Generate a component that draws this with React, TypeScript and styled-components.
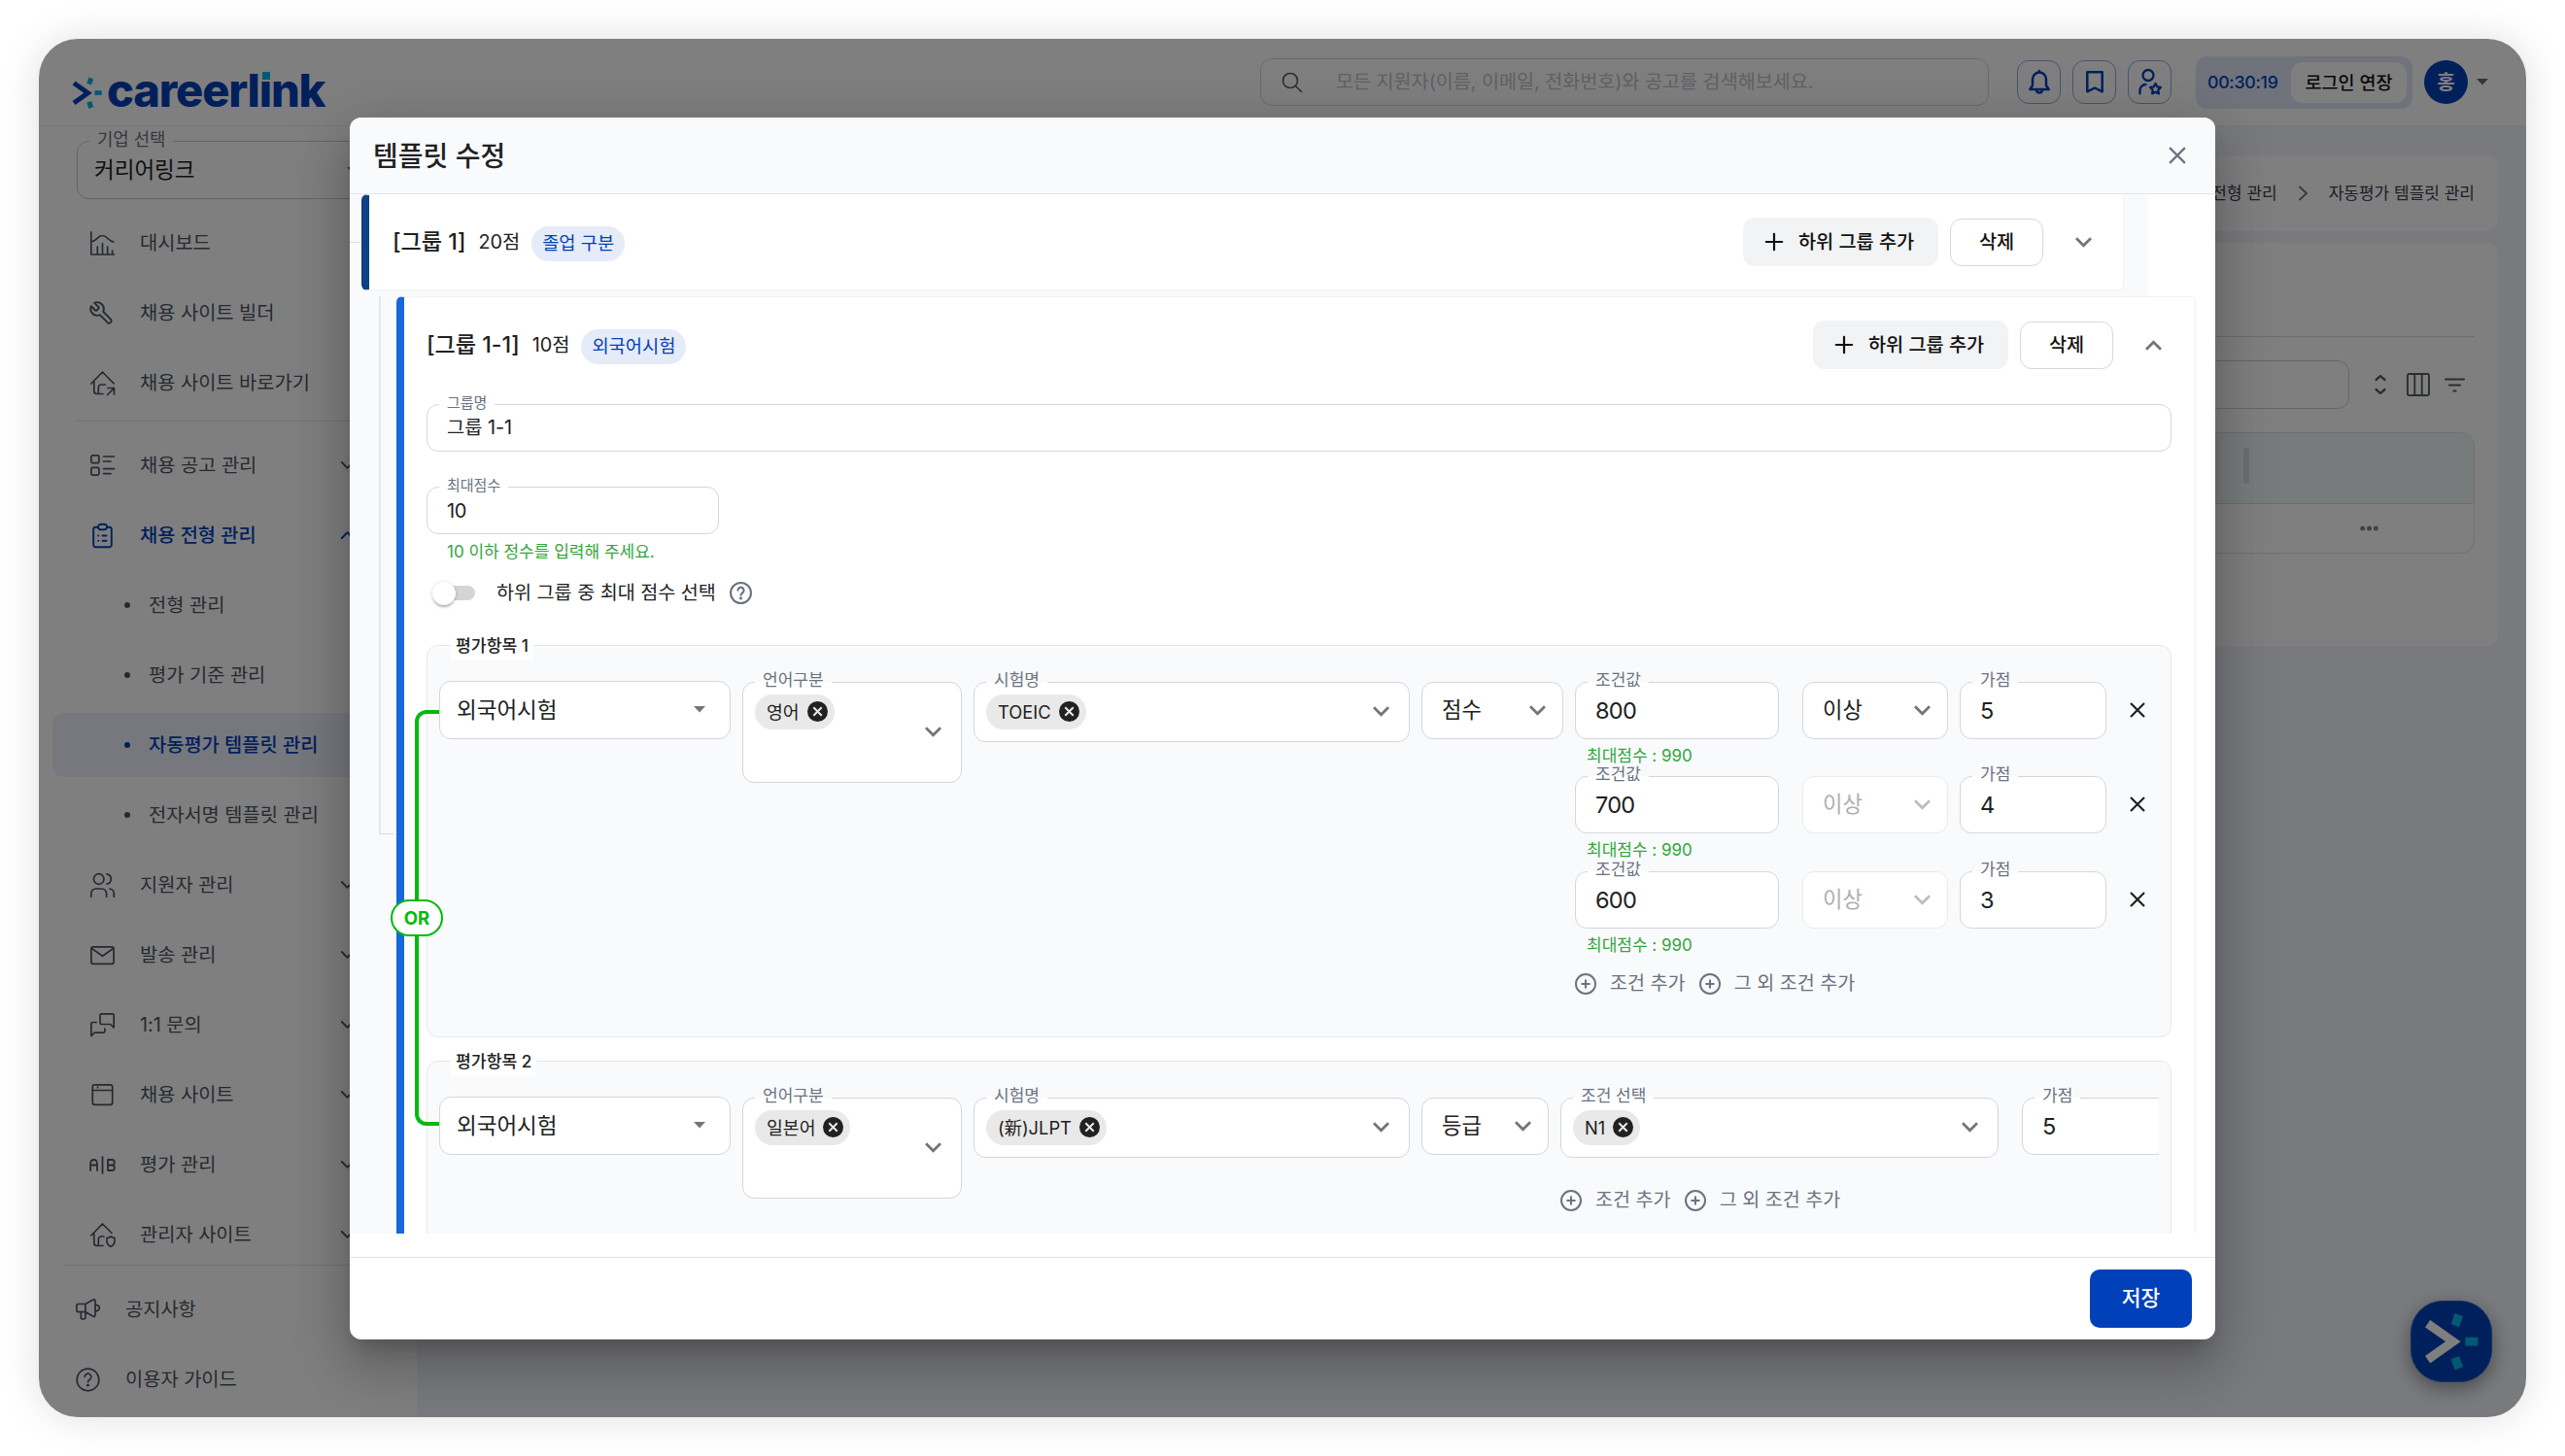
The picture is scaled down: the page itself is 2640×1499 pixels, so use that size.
import React from 'react';
import styled, { createGlobalStyle, css } from 'styled-components';
import { TbAB } from 'react-icons/tb';

const BRAND = '#0041b9';
const CYAN = '#00b4e6';
const TINT = '#f9fafc';
const GREEN = '#00bb0e';
const HELPER = '#33a63c';
const GRAY = '#6b7280';
const INK = '#212121';

const Global = createGlobalStyle`
  * { box-sizing: border-box; }
  body {
    margin: 0;
    background: #fff;
    font-family: Inter, 'Noto Sans CJK KR', sans-serif;
    color: ${INK};
  }
  svg { display: block; flex: none; }
`;

const Text = styled.span<{ $size: number; $weight?: number; $color?: string; $ls?: number; $pt?: number }>`
  padding-top: ${p => p.$pt ?? 1}px;
  font-size: ${p => p.$size}px;
  font-weight: ${p => p.$weight ?? 400};
  color: ${p => p.$color ?? 'inherit'};
  letter-spacing: ${p => p.$ls ?? 0}px;
  line-height: 1;
  white-space: nowrap;
`;

/* ---------- shell ---------- */

const Canvas = styled.div`
  width: 2640px;
  height: 1499px;
  padding: 40px;
  overflow: hidden;
`;

const Frame = styled.div`
  position: relative;
  width: 2560px;
  height: 1419px;
  border-radius: 40px;
  overflow: hidden;
  background: #fff;
  box-shadow: 0 0 40px rgba(0, 0, 0, 0.13);
`;

const Header = styled.header`
  display: flex;
  align-items: center;
  height: 90px;
  padding: 0 39px 0 34px;
  border-bottom: 1px solid #f0f1f5;
`;

const Logo = styled.div`
  display: flex;
  align-items: center;
  gap: 5px;
  padding-top: 16px;
  margin-right: auto;
`;

const Wordmark = styled.span`
  font-family: Inter, sans-serif;
  font-size: 47px;
  font-weight: 800;
  line-height: 1;
  letter-spacing: -1.15px;
  color: ${BRAND};
  white-space: nowrap;
`;

const DottedI = styled.span`
  position: relative;
  &::before {
    content: '';
    position: absolute;
    left: 1px;
    top: 7px;
    width: 11px;
    height: 12px;
    background: #fff;
  }
  &::after {
    content: '';
    position: absolute;
    left: 3px;
    top: 10px;
    width: 8px;
    height: 8px;
    background: ${CYAN};
  }
`;

const Search = styled.div`
  display: flex;
  align-items: center;
  gap: 35px;
  width: 750px;
  height: 49px;
  padding-left: 22px;
  margin-right: 29px;
  border: 1px solid #d3d6dc;
  border-radius: 12px;
`;

const IconButtons = styled.div`
  display: flex;
  gap: 12px;
  margin-right: 25px;
`;

const IconButton = styled.div`
  display: grid;
  place-items: center;
  width: 45px;
  height: 45px;
  border: 1px solid #8ea6de;
  border-radius: 12px;
`;

const Session = styled.div`
  display: flex;
  align-items: center;
  justify-content: space-between;
  width: 223px;
  height: 54px;
  padding: 0 6px 0 12px;
  margin-right: 12px;
  border-radius: 12px;
  background: #e0e7f9;
`;

const Extend = styled.div`
  display: grid;
  place-items: center;
  width: 119px;
  height: 42px;
  border-radius: 12px;
  background: #fff;
`;

const Avatar = styled.div`
  display: grid;
  place-items: center;
  width: 45px;
  height: 45px;
  margin-right: 9px;
  border-radius: 50%;
  background: ${BRAND};
`;

const Columns = styled.div`
  display: flex;
  height: 1329px;
`;

/* ---------- sidebar ---------- */

const Sidebar = styled.nav`
  display: flex;
  flex-direction: column;
  width: 389px;
  padding-top: 15px;
  background: #fff;
`;

const CompanySelect = styled.div`
  position: relative;
  display: flex;
  align-items: center;
  justify-content: space-between;
  flex: none;
  width: 310px;
  height: 60px;
  margin: 0 0 9px 39px;
  padding: 0 19px 0 17px;
  border: 1px solid #c6cad2;
  border-radius: 12px;
`;

const MenuScroll = styled.div`
  display: flex;
  flex-direction: column;
  flex: none;
  height: 1088px;
  overflow: hidden;
`;

const MenuDivider = styled.div`
  flex: none;
  height: 1px;
  margin: 3px 30px 9px 39px;
  background: #e5e7eb;
`;

const BottomMenu = styled.div`
  display: flex;
  flex-direction: column;
  padding-top: 9px;
  margin-left: 24px;
  border-top: 1px solid #e5e7eb;
`;

const Row = styled.div<{ $active?: boolean; $left?: number; $gap?: number }>`
  display: flex;
  align-items: center;
  flex: none;
  height: 66px;
  margin: 3px 12px 3px 14px;
  padding: 0 53px 0 ${p => p.$left ?? 39}px;
  border-radius: 12px;
  color: ${p => (p.$active ? BRAND : '#4b5563')};
  svg { margin-right: ${p => p.$gap ?? 26}px; }
  svg:last-child { margin: 0 0 0 auto; }
`;

const SubRow = styled(Row)<{ $selected?: boolean }>`
  padding-left: 74px;
  background: ${p => (p.$selected ? '#eef1fc' : 'transparent')};
`;

const Dot = styled.i`
  width: 6px;
  height: 6px;
  margin-right: 19px;
  border-radius: 50%;
  background: currentColor;
`;

/* ---------- page behind the dialog ---------- */

const Main = styled.main`
  flex: 1;
  display: flex;
  flex-direction: column;
  gap: 12px;
  padding: 30px 29px 0 30px;
  background: #f3f5fc;
`;

const Breadcrumb = styled.div`
  display: flex;
  align-items: center;
  justify-content: flex-end;
  gap: 22px;
  height: 78px;
  padding-right: 24px;
  border-radius: 12px;
  background: #fff;
`;

const Panel = styled.section`
  height: 415px;
  padding: 0 24px;
  border-radius: 12px;
  background: #fff;
`;

const PanelHead = styled.div`
  height: 97px;
  border-bottom: 1px solid #d9dbe0;
`;

const Toolbar = styled.div`
  display: flex;
  align-items: center;
  justify-content: flex-end;
  gap: 15px;
  height: 98px;
  padding-right: 10px;
`;

const ToolbarInput = styled.div`
  width: 700px;
  height: 50px;
  margin-right: 5px;
  border: 1px solid #c9ccd3;
  border-radius: 12px;
`;

const Table = styled.div`
  height: 125px;
  overflow: hidden;
  border: 1px solid #dcdfe3;
  border-radius: 14px;
`;

const TableHead = styled.div`
  display: flex;
  align-items: center;
  justify-content: flex-end;
  height: 73px;
  padding-right: 231px;
  border-bottom: 1px solid #d5d8dc;
  background: #f1f6f6;
`;

const ResizeHandle = styled.i`
  width: 6px;
  height: 37px;
  margin-bottom: 6px;
  border-radius: 3px;
  background: #d9dbde;
`;

const TableRow = styled.div`
  display: flex;
  align-items: center;
  justify-content: flex-end;
  height: 50px;
  padding-right: 98px;
`;

const Fab = styled.div`
  position: absolute;
  right: 35px;
  bottom: 36px;
  width: 84px;
  height: 84px;
  border: 1px solid #2a5fc4;
  border-radius: 33px;
  background: ${BRAND};
  box-shadow: 0 6px 20px rgba(0, 0, 0, 0.4);
`;

/* ---------- dialog ---------- */

const Backdrop = styled.div`
  position: absolute;
  inset: 0;
  display: flex;
  justify-content: center;
  align-items: center;
  background: rgba(0, 0, 0, 0.5);
`;

const Dialog = styled.div`
  display: flex;
  flex-direction: column;
  width: 1920px;
  height: 1258px;
  border-radius: 12px;
  overflow: hidden;
  background: #fff;
  box-shadow: 0 15px 20px -9px rgba(0, 0, 0, 0.2), 0 32px 51px 4px rgba(0, 0, 0, 0.14),
    0 12px 61px 11px rgba(0, 0, 0, 0.12);
`;

const DialogHead = styled.div`
  display: flex;
  align-items: center;
  justify-content: space-between;
  flex: none;
  height: 79px;
  padding: 0 30px 0 24px;
  border-bottom: 1px solid #e1e4ea;
  background: ${TINT};
`;

const DialogBody = styled.div`
  flex: none;
  height: 1070px;
  overflow: hidden;
`;

const Tree = styled.div`
  position: relative;
  width: 1851px;
  height: 1070px;
  background: ${TINT};
  &::before {
    content: '';
    position: absolute;
    left: 0;
    top: 49px;
    width: 12px;
    height: 1px;
    background: #dcdee2;
  }
`;

const GroupCard = styled.div<{ $bar: string; $nested?: boolean }>`
  position: relative;
  margin-left: ${p => (p.$nested ? 48 : 12)}px;
  width: ${p => (p.$nested ? 1852 : 1814)}px;
  background: #fff;
  border: 1px solid #f0f2f5;
  border-left: 8px solid ${p => p.$bar};
  border-radius: 6px;
  ${p =>
    p.$nested
      ? css`
          margin-top: 6px;
          height: 1100px;
          padding: 1px 24px 0 23px;
        `
      : css`
          height: 99px;
          border-top-color: #fff;
          padding: 0 24px;
        `}
`;

const Branch = styled.div`
  position: absolute;
  left: -26px;
  top: -1px;
  width: 15px;
  height: 554px;
  border-left: 2px solid #e5e7eb;
  border-bottom: 1px solid #d9dbe0;
`;

const GroupHead = styled.div<{ $tail: number }>`
  display: flex;
  align-items: center;
  height: 97px;
  padding-right: ${p => p.$tail}px;
`;

const Badge = styled.span`
  display: grid;
  place-items: center;
  height: 36px;
  padding: 0 11px;
  margin: 3px auto 0 12px;
  border-radius: 18px;
  background: #e6ebf8;
`;

const AddGroup = styled.div`
  display: flex;
  align-items: center;
  gap: 16px;
  width: 201px;
  height: 50px;
  padding-left: 23px;
  margin-right: 12px;
  border-radius: 12px;
  background: #f2f3f5;
`;

const Remove = styled.div`
  display: grid;
  place-items: center;
  width: 96px;
  height: 49px;
  margin-right: 33px;
  border: 1px solid #d5d8dd;
  border-radius: 12px;
`;

const FieldBox = styled.div<{ $w?: number; $h: number; $left?: number; $right?: number; $mt?: number; $muted?: boolean }>`
  position: relative;
  flex: none;
  display: flex;
  align-items: center;
  justify-content: space-between;
  width: ${p => (p.$w ? `${p.$w}px` : 'auto')};
  height: ${p => p.$h}px;
  margin-top: ${p => p.$mt ?? 0}px;
  padding: 0 ${p => p.$right ?? 20}px 0 ${p => p.$left ?? 20}px;
  border: 1px solid ${p => (p.$muted ? '#e8eaed' : '#d3d6db')};
  border-radius: 12px;
  background: #fff;
  color: ${p => (p.$muted ? '#adb0b5' : INK)};
`;

const Notch = styled.span`
  position: absolute;
  left: 12px;
  top: -1px;
  height: 2px;
  padding: 0 8px;
  display: flex;
  align-items: center;
  background: #fff;
  span { padding: 0 0 5px; }
`;

const HelpText = styled.div<{ $pl: number; $mt: number }>`
  display: flex;
  align-items: center;
  height: 20px;
  margin-top: ${p => p.$mt}px;
  padding-left: ${p => p.$pl}px;
`;

const SwitchRow = styled.div`
  display: flex;
  align-items: center;
  height: 30px;
  margin-top: 17px;
  padding-left: 8px;
`;

const HelpMark = styled.span`
  margin-left: 14px;
  color: ${GRAY};
`;

const Track = styled.span`
  display: flex;
  align-items: center;
  width: 42px;
  height: 15px;
  margin-right: 22px;
  border-radius: 8px;
  background: #d3d5d9;
`;

const Thumb = styled.span`
  width: 24px;
  height: 24px;
  margin-left: -2px;
  border-radius: 50%;
  background: #fff;
  box-shadow: 0 3px 2px -1px rgba(0, 0, 0, 0.2), 0 1px 4px rgba(0, 0, 0, 0.2);
`;

const Items = styled.div`
  position: relative;
  display: flex;
  flex-direction: column;
  gap: 24px;
  margin-top: 38px;
`;

const ItemBox = styled.div`
  position: relative;
  height: 404px;
  padding: 0 12px;
  border: 1px solid #e5e7eb;
  border-radius: 12px;
  background: ${TINT};
`;

const ItemTitle = styled.span`
  position: absolute;
  left: 24px;
  top: -15px;
  display: grid;
  place-items: center;
  height: 30px;
  padding: 0 5px;
  background: #fff;
`;

const ItemRow = styled.div`
  display: flex;
  align-items: flex-start;
  gap: 12px;
  padding-top: 36px;
  overflow: hidden;
`;

const Conditions = styled.div`
  display: flex;
  flex-direction: column;
`;

const ConditionRow = styled.div<{ $h: number }>`
  height: ${p => p.$h}px;
`;

const ConditionFields = styled.div<{ $top?: boolean }>`
  display: flex;
  align-items: ${p => (p.$top ? 'flex-start' : 'center')};
  gap: 12px;
  padding-top: ${p => (p.$top ? 0 : 1)}px;
`;

const Spacer = styled.span`
  width: 0;
`;

const AddRow = styled.div<{ $mt: number }>`
  display: flex;
  align-items: center;
  height: 24px;
  margin-top: ${p => p.$mt}px;
  color: ${GRAY};
  svg { margin-right: 14px; }
  span { margin-right: 14px; }
`;

const ChipSlot = styled.div`
  align-self: flex-start;
  margin-top: 12px;
`;

const Chip = styled.span`
  display: flex;
  align-items: center;
  gap: 8px;
  height: 36px;
  padding: 0 7px 0 12px;
  border-radius: 18px;
  background: #e9e9e9;
`;

const OrConnector = styled.div`
  position: absolute;
  left: -12px;
  top: 67px;
  z-index: 1;
  width: 25px;
  height: 428px;
  border: 4px solid ${GREEN};
  border-right: 0;
  border-radius: 12px 0 0 12px;
`;

const OrPill = styled.div`
  position: absolute;
  left: -37px;
  top: 262px;
  z-index: 2;
  display: grid;
  place-items: center;
  width: 54px;
  height: 38px;
  border: 2px solid ${GREEN};
  border-radius: 19px;
  background: #fff;
`;

const DialogFoot = styled.div`
  display: flex;
  align-items: center;
  justify-content: flex-end;
  height: 85px;
  margin-top: 24px;
  padding-right: 24px;
  border-top: 1px solid #e1e4e9;
`;

const Save = styled.div`
  display: grid;
  place-items: center;
  width: 105px;
  height: 60px;
  border-radius: 10px;
  background: ${BRAND};
`;

/* ---------- icons ---------- */

const Line: React.FC<{ w?: number; h?: number; sw?: number; color?: string; children: React.ReactNode }> = ({
  w = 25,
  h = 25,
  sw = 1.7,
  color = 'currentColor',
  children,
}) => (
  <svg
    width={w}
    height={h}
    viewBox={`0 0 ${w} ${h}`}
    fill="none"
    stroke={color}
    strokeWidth={sw}
    strokeLinecap="round"
    strokeLinejoin="round"
    overflow="visible"
  >
    {children}
  </svg>
);

const Chevron = ({ up, color = '#757575', w = 17, sw = 2.8 }: { up?: boolean; color?: string; w?: number; sw?: number }) => (
  <svg width={w} height={11} viewBox={`0 0 ${w} 11`} fill="none" stroke={color} strokeWidth={sw}>
    <path d={up ? `M1 9.7 ${w / 2} 2.2 ${w - 1} 9.7` : `M1 1.3 ${w / 2} 8.8 ${w - 1} 1.3`} />
  </svg>
);

const MenuChevron = ({ up }: { up?: boolean }) => (
  <Line w={13} h={8} sw={1.8}>
    <path d={up ? 'M.8 7 6.5 1.2 12.2 7' : 'M.8 1 6.5 6.8 12.2 1'} />
  </Line>
);

const Caret = ({ color = '#6b6b6b' }: { color?: string }) => (
  <svg width="12" height="7" viewBox="0 0 12 7">
    <path d="M0 0h12L6 6.5z" fill={color} />
  </svg>
);

const Cross = ({ size, sw, color }: { size: number; sw: number; color: string }) => (
  <svg width={size} height={size} viewBox="0 0 16 16" stroke={color} strokeWidth={sw}>
    <path d="M1 1 15 15M15 1 1 15" />
  </svg>
);

const Cancel = () => (
  <svg width="21" height="21" viewBox="0 0 21 21">
    <circle cx="10.5" cy="10.5" r="10.5" fill={INK} />
    <path d="M6.3 6.3 14.7 14.7M14.7 6.3 6.3 14.7" stroke="#e9e9e9" strokeWidth="2" />
  </svg>
);

const PlusCircle = () => (
  <Line w={22} h={22} sw={2} color={GRAY}>
    <circle cx="11" cy="11" r="10" />
    <path d="M11 7.2v7.6M7.2 11h7.6" />
  </Line>
);

const Plus = () => (
  <Line w={18} h={18} sw={2.2} color="#111">
    <path d="M9 .8v16.4M.8 9h16.4" />
  </Line>
);

const HelpIcon = ({ d, sw }: { d: number; sw: number }) => (
  <svg width={d} height={d} viewBox="0 0 24 24" fill="none" stroke="currentColor" strokeWidth={sw} strokeLinecap="round">
    <circle cx="12" cy="12" r="10.9" />
    <path d="M8.8 9.2a3.2 3.2 0 1 1 5 2.6c-1.2.8-1.8 1.3-1.8 2.6" />
    <circle cx="12" cy="17.5" r=".6" fill="currentColor" />
  </svg>
);

const icons = {
  dashboard: (
    <Line>
      <path d="M.8.8V24h23.6M1.5 10.5c5 0 5.5-6 11-6s6 6.5 11.5 6.5M7.3 16.2V24M12.5 12.5V24M17.7 16.2V24M22.6 20V24" />
    </Line>
  ),
  wrench: (
    <Line w={27} h={27}>
      <path
        transform="matrix(-1.125 0 0 1.125 26 0)"
        d="M14.7 6.3a1 1 0 0 0 0 1.4l1.6 1.6a1 1 0 0 0 1.4 0l3.77-3.77a6 6 0 0 1-7.94 7.94l-6.91 6.91a2.12 2.12 0 0 1-3-3l6.91-6.91a6 6 0 0 1 7.94-7.94l-3.76 3.76z"
      />
    </Line>
  ),
  homeArrow: (
    <Line>
      <path d="M.8 13 12.5 1 24.2 13M3.8 10.5V20.5q0 3 3 3H13M8.3 23V17q0-3 3-3H15.5M17.5 24.5l7-7M18 17.5h6.5V24" />
    </Line>
  ),
  list: (
    <Line h={22}>
      <rect x=".9" y=".9" width="8" height="7.8" rx="1.5" />
      <rect x=".9" y="13.3" width="8" height="7.8" rx="1.5" />
      <path d="M13.5 2h11M13.5 7h7.5M13.5 14.6h11M13.5 19.6h7.5" />
    </Line>
  ),
  clipboard: (
    <Line sw={1.9}>
      <path d="M8 3.7H5.5a2.3 2.3 0 0 0-2.3 2.3V22a2.3 2.3 0 0 0 2.3 2.3h14A2.3 2.3 0 0 0 21.8 22V6a2.3 2.3 0 0 0-2.3-2.3H17" />
      <rect x="8" y=".8" width="9" height="5.4" rx="2.7" />
      <path d="M8.2 12.5h.1M12.5 12.5h4M8.2 17.8h.1M12.5 17.8h4" />
    </Line>
  ),
  users: (
    <Line>
      <circle cx="8.7" cy="6" r="5.3" />
      <path d="M.8 24.2v-3.2a5 5 0 0 1 5-5h5.8a5 5 0 0 1 5 5v3.2M17 .8a5.3 5.3 0 0 1 0 10.4M20 16a5.2 5.2 0 0 1 4.3 5v3.2" />
    </Line>
  ),
  mail: (
    <Line h={19}>
      <rect x=".9" y=".9" width="23.2" height="17.4" rx="2" />
      <path d="M1.5 2.5 12.5 10.3 23.5 2.5" />
    </Line>
  ),
  chat: (
    <Line h={24}>
      <path d="M11.5.9h11.2q1.5 0 1.5 1.5v12.5l-3.6-3.4h-9.1q-1.5 0-1.5-1.5V2.4q0-1.5 1.5-1.5zM6 9.5H2.4Q.9 9.5.9 11v12.5l3.5-3.3h9q1.5 0 1.5-1.5V16" />
    </Line>
  ),
  browser: (
    <Line h={22}>
      <rect x="2.3" y=".9" width="20.4" height="20.4" rx="2" />
      <path d="M2.3 6.5h20.4M7.5 3v.8" />
    </Line>
  ),
  homeShield: (
    <Line>
      <path d="M.8 13 12.5 1 22 10.5M3.8 10.5V20.5q0 3 3 3H13M8.3 23V17q0-3 3-3H14M17 15.5q2 0 4-1.5 2 1.5 4 1.5v3q0 4-4 6-4-2-4-6z" />
    </Line>
  ),
  megaphone: (
    <Line h={22}>
      <path d="M10 5.5H2.6Q.9 5.5.9 7.2V12q0 1.7 1.7 1.7H10M10 5.5v8.2M10 5.5 17.5 1.3Q20 .3 20 2.5v14.5q0 2.2-2.5 1L10 13.7M5.3 13.7v5.5q0 1.8 2.3 1.8t2.4-1.8v-5.5M20.3 6.3q4 .5 4 3.3t-4 3.5" />
    </Line>
  ),
  help: <HelpIcon d={25} sw={1.6} />,
  ab: <TbAB size={33} strokeWidth={1.3} />,
};

const LogoMark = ({ size, arrow, ...pos }: { size: number; arrow: string; style?: React.CSSProperties }) => (
  <svg width={size} height={size * 1.08} viewBox="0 0 31 33.5" {...pos}>
    <path d="M2 6.5 16.5 16.7 2 27" fill="none" stroke={arrow} strokeWidth="5" />
    <path d="M17.5.5 22.2 2.4 20 8.5 15.3 6.8zM23.5 14.3h7.2v4.8h-7.2zM15.3 26.7 20 25 22.2 31 17.5 33z" fill={CYAN} />
  </svg>
);

/* ---------- composed parts ---------- */

type FieldProps = {
  w?: number;
  h?: number;
  label?: string;
  labelSize?: number;
  mt?: number;
  left?: number;
  right?: number;
  muted?: boolean;
  children?: React.ReactNode;
};

const Field = ({ w, h = 59, label, labelSize = 17, mt, left, right, muted, children }: FieldProps) => (
  <FieldBox $w={w} $h={h} $mt={mt} $left={left} $right={right} $muted={muted}>
    {label && (
      <Notch>
        <Text $size={labelSize} $color={GRAY}>{label}</Text>
      </Notch>
    )}
    {children}
  </FieldBox>
);

const Value = ({ children }: { children: string }) => (
  <Text $size={23.5} $ls={-0.7} $pt={2}>{children}</Text>
);

const ChipField = ({ w, h, label, chip }: { w: number; h: number; label: string; chip: string }) => (
  <FieldBox $w={w} $h={h} $left={12} $right={20} $mt={1}>
    <Notch>
      <Text $size={17} $color={GRAY}>{label}</Text>
    </Notch>
    <ChipSlot>
      <Chip>
        <Text $size={18.3} $pt={2}>{chip}</Text>
        <Cancel />
      </Chip>
    </ChipSlot>
    <Chevron />
  </FieldBox>
);

const Condition = ({ value, score, muted, h }: { value: string; score: string; muted?: boolean; h: number }) => (
  <ConditionRow $h={h}>
    <ConditionFields>
      <Field w={210} label="조건값"><Value>{value}</Value></Field>
      <Spacer />
      <Field w={150} right={17} muted={muted}>
        <Text $size={22.2}>이상</Text>
        <Chevron color={muted ? '#bdbdbd' : undefined} />
      </Field>
      <Field w={151} label="가점"><Value>{score}</Value></Field>
      <Spacer />
      <Cross size={16} sw={2.2} color={INK} />
    </ConditionFields>
    <HelpText $pl={12} $mt={7}>
      <Text $size={17} $color={HELPER} $pt={2}>최대점수 : 990</Text>
    </HelpText>
  </ConditionRow>
);

const AddConditions = ({ mt }: { mt: number }) => (
  <AddRow $mt={mt}>
    <PlusCircle />
    <Text $size={19.6}>조건 추가</Text>
    <PlusCircle />
    <Text $size={19.6}>그 외 조건 추가</Text>
  </AddRow>
);

const TypeSelect = () => (
  <Field w={300} h={60} left={17} right={25}>
    <Text $size={22.5} $pt={1}>외국어시험</Text>
    <Caret color="#757575" />
  </Field>
);

const GroupHeader = ({ name, score, badge, open, tail }: { name: string; score: string; badge: string; open?: boolean; tail: number }) => (
  <GroupHead $tail={tail}>
    <Text $size={23.1} $weight={500}>{name}</Text>
    <Text $size={19.8} style={{ marginLeft: 13 }}>{score}</Text>
    <Badge><Text $size={18.7} $color={BRAND}>{badge}</Text></Badge>
    <AddGroup>
      <Plus />
      <Text $size={19.7} $weight={500} $color="#111">하위 그룹 추가</Text>
    </AddGroup>
    <Remove><Text $size={19.7} $weight={500} $color="#111">삭제</Text></Remove>
    <Chevron up={open} />
  </GroupHead>
);

const iconInset = (icon: string) => (icon === 'ab' ? 4 : icon === 'wrench' ? 1 : 0);

const MenuItem = ({ icon, label, arrow, active, bottom }: { icon: keyof typeof icons; label: string; arrow?: 'up' | 'down'; active?: boolean; bottom?: boolean }) => (
  <Row $active={active} $left={(bottom ? 0 : 39) - iconInset(icon)} $gap={26 - iconInset(icon)}>
    {icons[icon]}
    <Text $size={19.8} $weight={active ? 500 : 400}>{label}</Text>
    {arrow && <MenuChevron up={arrow === 'up'} />}
  </Row>
);

const SubItem = ({ label, selected }: { label: string; selected?: boolean }) => (
  <SubRow $active={selected} $selected={selected}>
    <Dot />
    <Text $size={19.8} $weight={selected ? 500 : 400}>{label}</Text>
  </SubRow>
);

const TopBar = () => (
  <Header>
    <Logo>
      <LogoMark size={31} arrow={BRAND} style={{ marginTop: 6 }} />
      <Wordmark>careerl<DottedI>i</DottedI>nk</Wordmark>
    </Logo>
    <Search>
      <Line w={20} h={20} sw={1.7} color="#5b606b">
        <circle cx="8" cy="8" r="7.5" />
        <path d="M13.5 13.5 19.5 19.5" />
      </Line>
      <Text $size={19.6} $color="#bfc3cb">모든 지원자(이름, 이메일, 전화번호)와 공고를 검색해보세요.</Text>
    </Search>
    <IconButtons>
      <IconButton>
        <Line w={22} h={26} sw={2.5} color={BRAND}>
          <path d="M11 2.5a7 7 0 0 1 7 7v6.5l2.7 4H1.3l2.7-4V9.5a7 7 0 0 1 7-7zM11 .9v1.5M7.7 20.5a3.4 3.9 0 0 0 6.6 0" />
        </Line>
      </IconButton>
      <IconButton>
        <Line w={18} h={23} sw={2.5} color={BRAND}>
          <path d="M1.3 1.3h15.4v20L9 17.5l-7.7 3.8z" />
        </Line>
      </IconButton>
      <IconButton>
        <Line w={24} h={27} sw={2.3} color={BRAND}>
          <circle cx="10" cy="6.5" r="5.5" />
          <path d="M1.5 25.5v-3a6 6 0 0 1 6-6.5M17.5 15l1.7 3.3 3.7.6-2.6 2.7.6 3.8-3.4-1.7-3.4 1.7.6-3.8-2.6-2.7 3.7-.6z" />
        </Line>
      </IconButton>
    </IconButtons>
    <Session>
      <Text $size={17.8} $weight={500} $color={BRAND} $ls={-0.3}>00:30:19</Text>
      <Extend><Text $size={18.5} $weight={500} $color="#111">로그인 연장</Text></Extend>
    </Session>
    <Avatar><Text $size={20} $weight={700} $color="#fff">홍</Text></Avatar>
    <Caret />
  </Header>
);

const SideMenu = () => (
  <Sidebar>
    <CompanySelect>
      <Notch><Text $size={17.8} $color={GRAY}>기업 선택</Text></Notch>
      <Text $size={22.5}>커리어링크</Text>
      <Caret />
    </CompanySelect>
    <MenuScroll>
      <MenuItem icon="dashboard" label="대시보드" />
      <MenuItem icon="wrench" label="채용 사이트 빌더" />
      <MenuItem icon="homeArrow" label="채용 사이트 바로가기" />
      <MenuDivider />
      <MenuItem icon="list" label="채용 공고 관리" arrow="down" />
      <MenuItem icon="clipboard" label="채용 전형 관리" arrow="up" active />
      <SubItem label="전형 관리" />
      <SubItem label="평가 기준 관리" />
      <SubItem label="자동평가 템플릿 관리" selected />
      <SubItem label="전자서명 템플릿 관리" />
      <MenuItem icon="users" label="지원자 관리" arrow="down" />
      <MenuItem icon="mail" label="발송 관리" arrow="down" />
      <MenuItem icon="chat" label="1:1 문의" arrow="down" />
      <MenuItem icon="browser" label="채용 사이트" arrow="down" />
      <MenuItem icon="ab" label="평가 관리" arrow="down" />
      <MenuItem icon="homeShield" label="관리자 사이트" arrow="down" />
    </MenuScroll>
    <BottomMenu>
      <MenuItem icon="megaphone" label="공지사항" bottom />
      <MenuItem icon="help" label="이용자 가이드" bottom />
    </BottomMenu>
  </Sidebar>
);

const Background = () => (
  <Main>
    <Breadcrumb>
      <Text $size={17} $color="#374151">채용 전형 관리</Text>
      <Line w={9} h={14} sw={1.8} color={GRAY}><path d="M1 .5 8 7 1 13.5" /></Line>
      <Text $size={17} $color="#374151">자동평가 템플릿 관리</Text>
    </Breadcrumb>
    <Panel>
      <PanelHead />
      <Toolbar>
        <ToolbarInput />
        <Line w={24} h={20} sw={2.3} color="#555b66">
          <path d="M7.5 5 12 1.2 16.5 5M7.5 15 12 18.8 16.5 15" />
        </Line>
        <Line w={24} h={24} sw={1.9} color="#555b66">
          <rect x="1" y="1" width="22" height="22" rx="1.5" />
          <path d="M8.3 1v22M15.7 1v22" />
        </Line>
        <Line w={21} h={15} sw={2.2} color="#555b66">
          <path d="M1 1.5h19M5 7.5h11M9.5 13.5h2" />
        </Line>
      </Toolbar>
      <Table>
        <TableHead><ResizeHandle /></TableHead>
        <TableRow>
          <svg width="19" height="6" viewBox="0 0 19 6" fill="#85878c">
            <circle cx="2.7" cy="3" r="2.5" />
            <circle cx="9.5" cy="3" r="2.5" />
            <circle cx="16.3" cy="3" r="2.5" />
          </svg>
        </TableRow>
      </Table>
    </Panel>
  </Main>
);

const EditDialog = () => (
  <Dialog>
    <DialogHead>
      <Text $size={28} $weight={500} $pt={2}>템플릿 수정</Text>
      <Cross size={18} sw={2} color={GRAY} />
    </DialogHead>
    <DialogBody>
      <Tree>
        <GroupCard $bar="#0f3f86">
          <GroupHeader name="[그룹 1]" score="20점" badge="졸업 구분" tail={8} />
        </GroupCard>
        <GroupCard $bar="#1668dc" $nested>
          <Branch />
          <GroupHeader name="[그룹 1-1]" score="10점" badge="외국어시험" open tail={10} />
          <Field h={49} label="그룹명" labelSize={15} mt={12}>
            <Text $size={19.8} $pt={2}>그룹 1-1</Text>
          </Field>
          <Field w={301} h={49} label="최대점수" labelSize={15} mt={36}>
            <Text $size={20} $ls={-0.3}>10</Text>
          </Field>
          <HelpText $pl={21} $mt={9}>
            <Text $size={17} $color={HELPER} $pt={0}>10 이하 정수를 입력해 주세요.</Text>
          </HelpText>
          <SwitchRow>
            <Track><Thumb /></Track>
            <Text $size={19.6} $pt={0}>하위 그룹 중 최대 점수 선택</Text>
            <HelpMark><HelpIcon d={23} sw={2.2} /></HelpMark>
          </SwitchRow>
          <Items>
            <OrConnector />
            <OrPill><Text $size={18.5} $weight={700} $color={GREEN}>OR</Text></OrPill>
            <ItemBox>
              <ItemTitle><Text $size={17.2} $weight={500}>평가항목 1</Text></ItemTitle>
              <ItemRow>
                <TypeSelect />
                <ChipField w={226} h={104} label="언어구분" chip="영어" />
                <ChipField w={449} h={62} label="시험명" chip="TOEIC" />
                <Field w={146} mt={1} right={17}>
                  <Text $size={22.2}>점수</Text>
                  <Chevron />
                </Field>
                <Conditions>
                  <Condition value="800" score="5" h={97} />
                  <Condition value="700" score="4" muted h={98} />
                  <Condition value="600" score="3" muted h={97} />
                  <AddConditions mt={8} />
                </Conditions>
              </ItemRow>
            </ItemBox>
            <ItemBox>
              <ItemTitle><Text $size={17.2} $weight={500}>평가항목 2</Text></ItemTitle>
              <ItemRow>
                <TypeSelect />
                <ChipField w={226} h={104} label="언어구분" chip="일본어" />
                <ChipField w={449} h={62} label="시험명" chip="(新)JLPT" />
                <Field w={131} mt={1} right={17}>
                  <Text $size={22.2}>등급</Text>
                  <Chevron />
                </Field>
                <Conditions>
                  <ConditionFields $top>
                    <ChipField w={451} h={62} label="조건 선택" chip="N1" />
                    <Spacer />
                    <Field w={150} mt={1} label="가점"><Value>5</Value></Field>
                  </ConditionFields>
                  <AddConditions mt={32} />
                </Conditions>
              </ItemRow>
            </ItemBox>
          </Items>
        </GroupCard>
      </Tree>
    </DialogBody>
    <DialogFoot>
      <Save><Text $size={21.5} $weight={500} $color="#fff">저장</Text></Save>
    </DialogFoot>
  </Dialog>
);

export default function App() {
  return (
    <>
      <Global />
      <Canvas>
        <Frame>
          <TopBar />
          <Columns>
            <SideMenu />
            <Background />
          </Columns>
          <Fab>
            <LogoMark size={56} arrow="#fff" style={{ margin: '11px 0 0 13px' }} />
          </Fab>
          <Backdrop>
            <EditDialog />
          </Backdrop>
        </Frame>
      </Canvas>
    </>
  );
}
